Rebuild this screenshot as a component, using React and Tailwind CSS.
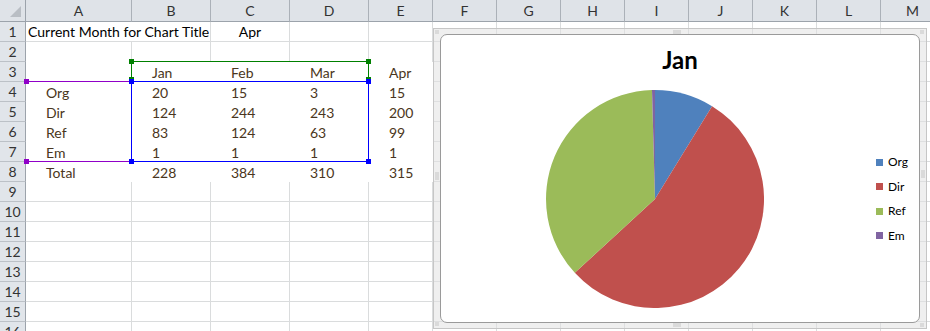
import React from "react";

const COLS = ["A", "B", "C", "D", "E", "F", "G", "H", "I", "J", "K", "L", "M"];
const ROWS = Array.from({ length: 16 }, (_, i) => i + 1);

const DATA = {
  3: ["", "Jan", "Feb", "Mar", "Apr"],
  4: ["Org", "20", "15", "3", "15"],
  5: ["Dir", "124", "244", "243", "200"],
  6: ["Ref", "83", "124", "63", "99"],
  7: ["Em", "1", "1", "1", "1"],
  8: ["Total", "228", "384", "310", "315"],
};

const SERIES = [
  { name: "Org", v: 20, color: "#4f81bd" },
  { name: "Dir", v: 124, color: "#c0504d" },
  { name: "Ref", v: 83, color: "#9bbb59" },
  { name: "Em", v: 1, color: "#8064a2" },
];

function slices() {
  const total = SERIES.reduce((s, x) => s + x.v, 0);
  const cx = 109, cy = 109, r = 109;
  let a = -Math.PI / 2;
  return SERIES.map((s) => {
    const da = (s.v / total) * Math.PI * 2;
    const a2 = a + da;
    const x1 = cx + r * Math.cos(a), y1 = cy + r * Math.sin(a);
    const x2 = cx + r * Math.cos(a2), y2 = cy + r * Math.sin(a2);
    const large = da > Math.PI ? 1 : 0;
    const d = `M${cx},${cy} L${x1.toFixed(2)},${y1.toFixed(2)} A${r},${r} 0 ${large} 1 ${x2.toFixed(2)},${y2.toFixed(2)} Z`;
    a = a2;
    return { d, color: s.color };
  });
}

function cellBorder(r, c) {
  const noRight = (r === 1 && c === 0) || (r >= 3 && r <= 8 && c <= 4);
  const noBottom = r >= 2 && r <= 8 && c <= 4;
  if (noRight && noBottom) return "";
  if (noRight) return "border-b border-[#dadcdd]";
  if (noBottom) return "border-r border-[#dadcdd]";
  return "border-r border-b border-[#dadcdd]";
}

function cellContent(r, c) {
  if (r === 1 && c === 0)
    return (
      <span className="pl-[2px] whitespace-nowrap text-black">Current Month for Chart Title</span>
    );
  if (r === 1 && c === 2)
    return <span className="block w-full text-center text-black">Apr</span>;
  if (DATA[r] && c <= 4 && DATA[r][c])
    return <span className="pl-[20px] whitespace-nowrap text-[#4a3620]">{DATA[r][c]}</span>;
  return null;
}

function Dots({ cols, rows }) {
  const w = cols * 2 + 1;
  const h = rows * 2 + 1;
  const pts = [];
  for (let i = 0; i < cols; i++)
    for (let j = 0; j < rows; j++) pts.push([i * 2 + 1, j * 2 + 1]);
  return (
    <svg width={w} height={h} viewBox={`0 0 ${w} ${h}`}>
      {pts.map(([x, y], k) => (
        <rect key={k} x={x - 0.5} y={y - 0.5} width="1" height="1" fill="#9a9a9a" />
      ))}
    </svg>
  );
}

function Handle({ x, y, color }) {
  return (
    <div
      className="absolute w-[5px] h-[5px]"
      style={{ left: x - 2, top: y - 2, background: color }}
    />
  );
}

export default function App() {
  const paths = slices();
  return (
    <div className="relative w-[930px] h-[331px] overflow-hidden bg-white font-['Lato',sans-serif] text-[14px]">
      <div className="grid grid-cols-[26px_106px_79px_79px_79px_64px_64px_64px_64px_64px_64px_64px_64px_64px] grid-rows-[22px_repeat(16,20px)] w-[945px]">
        {/* corner */}
        <div className="bg-[#dfe3e8] border-r border-b border-[#9ca3ab] relative">
          <svg width="25" height="21" className="absolute left-0 top-0">
            <polygon points="21,6 21,17 10,17" fill="#b9bec4" />
          </svg>
        </div>
        {COLS.map((c) => (
          <div
            key={c}
            className="bg-[#dfe3e8] border-r border-b border-r-[#abb1b8] border-b-[#9ca3ab] flex items-center justify-center text-[#333] leading-none"
          >
            {c}
          </div>
        ))}
        {ROWS.map((r) => (
          <React.Fragment key={r}>
            <div className="bg-[#e1e5ea] border-r border-b border-r-[#9ca3ab] border-b-[#bcc1c7] flex items-center justify-center text-[#333] leading-none">
              {r}
            </div>
            {COLS.map((c, ci) => (
              <div
                key={c}
                className={`flex items-center leading-[19px] ${cellBorder(r, ci)}`}
              >
                {cellContent(r, ci)}
              </div>
            ))}
          </React.Fragment>
        ))}
      </div>

      {/* selection ranges */}
      <div className="absolute left-[26px] top-[81px] w-[106px] h-[81px] border-t border-b border-[#9000c8]" />
      <div className="absolute left-[131px] top-[61px] w-[238px] h-[21px] border-t border-l border-r border-[#008000]" />
      <div className="absolute left-[131px] top-[81px] w-[238px] h-[81px] border border-[#0000ff]" />
      <Handle x={26} y={81} color="#9000c8" />
      <Handle x={26} y={161} color="#9000c8" />
      <Handle x={131} y={61} color="#008000" />
      <Handle x={368} y={61} color="#008000" />
      <Handle x={131} y={79} color="#008000" />
      <Handle x={368} y={79} color="#008000" />
      <Handle x={131} y={81} color="#0000ff" />
      <Handle x={368} y={81} color="#0000ff" />
      <Handle x={131} y={161} color="#0000ff" />
      <Handle x={368} y={161} color="#0000ff" />

      {/* chart */}
      <div className="absolute left-[433px] top-[28px] w-[494px] h-[301px] border border-[#c6c6c6] bg-[rgba(225,225,225,0.55)] pt-[5px] pb-[5px] pl-[6px] pr-[6px]">
        <div className="absolute left-[1px] top-[1px]"><Dots cols={2} rows={2} /></div>
        <div className="absolute right-[1px] top-[1px]"><Dots cols={2} rows={2} /></div>
        <div className="absolute left-[1px] bottom-[1px]"><Dots cols={2} rows={2} /></div>
        <div className="absolute right-[1px] bottom-[0px]"><Dots cols={2} rows={2} /></div>
        <div className="absolute left-[239px] top-[1px]"><Dots cols={4} rows={2} /></div>
        <div className="absolute left-[239px] bottom-[0px]"><Dots cols={4} rows={2} /></div>
        <div className="absolute left-[1px] top-[143px]"><Dots cols={2} rows={4} /></div>
        <div className="absolute right-[0px] top-[141px]"><Dots cols={2} rows={4} /></div>

        <div className="w-full h-full bg-white border border-[#9a9a9a] rounded-[7px] flex flex-col">
          <div className="mt-[10px] text-center font-bold text-[24px] leading-[29px] text-black">Jan</div>
          <div className="mt-[16px] flex items-center pl-[105px]">
            <svg width="218" height="218" viewBox="0 0 218 218" className="shrink-0">
              {paths.map((p, i) => (
                <path key={i} d={p.d} fill={p.color} />
              ))}
            </svg>
            <div className="ml-[112px] flex flex-col">
              {SERIES.map((s) => (
                <div key={s.name} className="h-[24.5px] flex items-center gap-[5px] text-[12px] text-black">
                  <span className="w-[7px] h-[7px] shrink-0" style={{ background: s.color }} />
                  <span className="leading-none">{s.name}</span>
                </div>
              ))}
            </div>
          </div>
        </div>
      </div>
    </div>
  );
}
